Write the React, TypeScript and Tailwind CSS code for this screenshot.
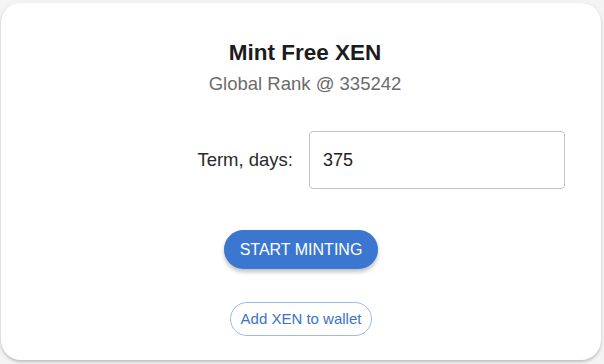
import { useState } from "react";

function MintCard() {
  const [term, setTerm] = useState("375");

  return (
    <div className="ml-[1px] mt-[3px] w-[600px] h-[357px] rounded-[20px] bg-white shadow-[0_2px_3px_rgba(0,0,0,0.18),0_1px_6px_rgba(0,0,0,0.06)] flex flex-col items-center pt-[36px]">
      <h2 className="ml-[8px] text-[22.5px] leading-[28px] font-bold text-[#1c1c1c]">Mint Free XEN</h2>
      <p className="ml-[8px] mt-[5px] text-[18.5px] leading-[24px] text-[#6b6b6b]">Global Rank @ 335242</p>

      <div className="mt-[35px] w-full flex items-center">
        <div className="flex-1 flex justify-end pr-[8px]">
          <label className="text-[18.5px] text-[#2a2a2a]">Term, days:</label>
        </div>
        <div className="flex-1 pl-[8px]">
          <input
            value={term}
            onChange={(e) => setTerm(e.target.value)}
            className="w-[256px] h-[58px] rounded-[4px] border border-[#c4c4c4] pl-[13px] text-[18px] text-[#222] outline-none"
          />
        </div>
      </div>

      <button className="mt-[41px] h-[39px] px-[16px] rounded-full bg-[#3b77d0] text-white text-[16px] uppercase shadow-[0_3px_4px_rgba(0,0,0,0.25)]">
        Start Minting
      </button>

      <button className="mt-[33px] h-[34px] px-[10px] rounded-full border border-[#9bbbe8] text-[#3b72c8] text-[15px]">
        Add XEN to wallet
      </button>
    </div>
  );
}

export default function App() {
  return (
    <div className="w-[604px] h-[364px] bg-[#f4f4f4] overflow-hidden font-['Liberation_Sans',Arial,sans-serif]">
      <MintCard />
    </div>
  );
}
